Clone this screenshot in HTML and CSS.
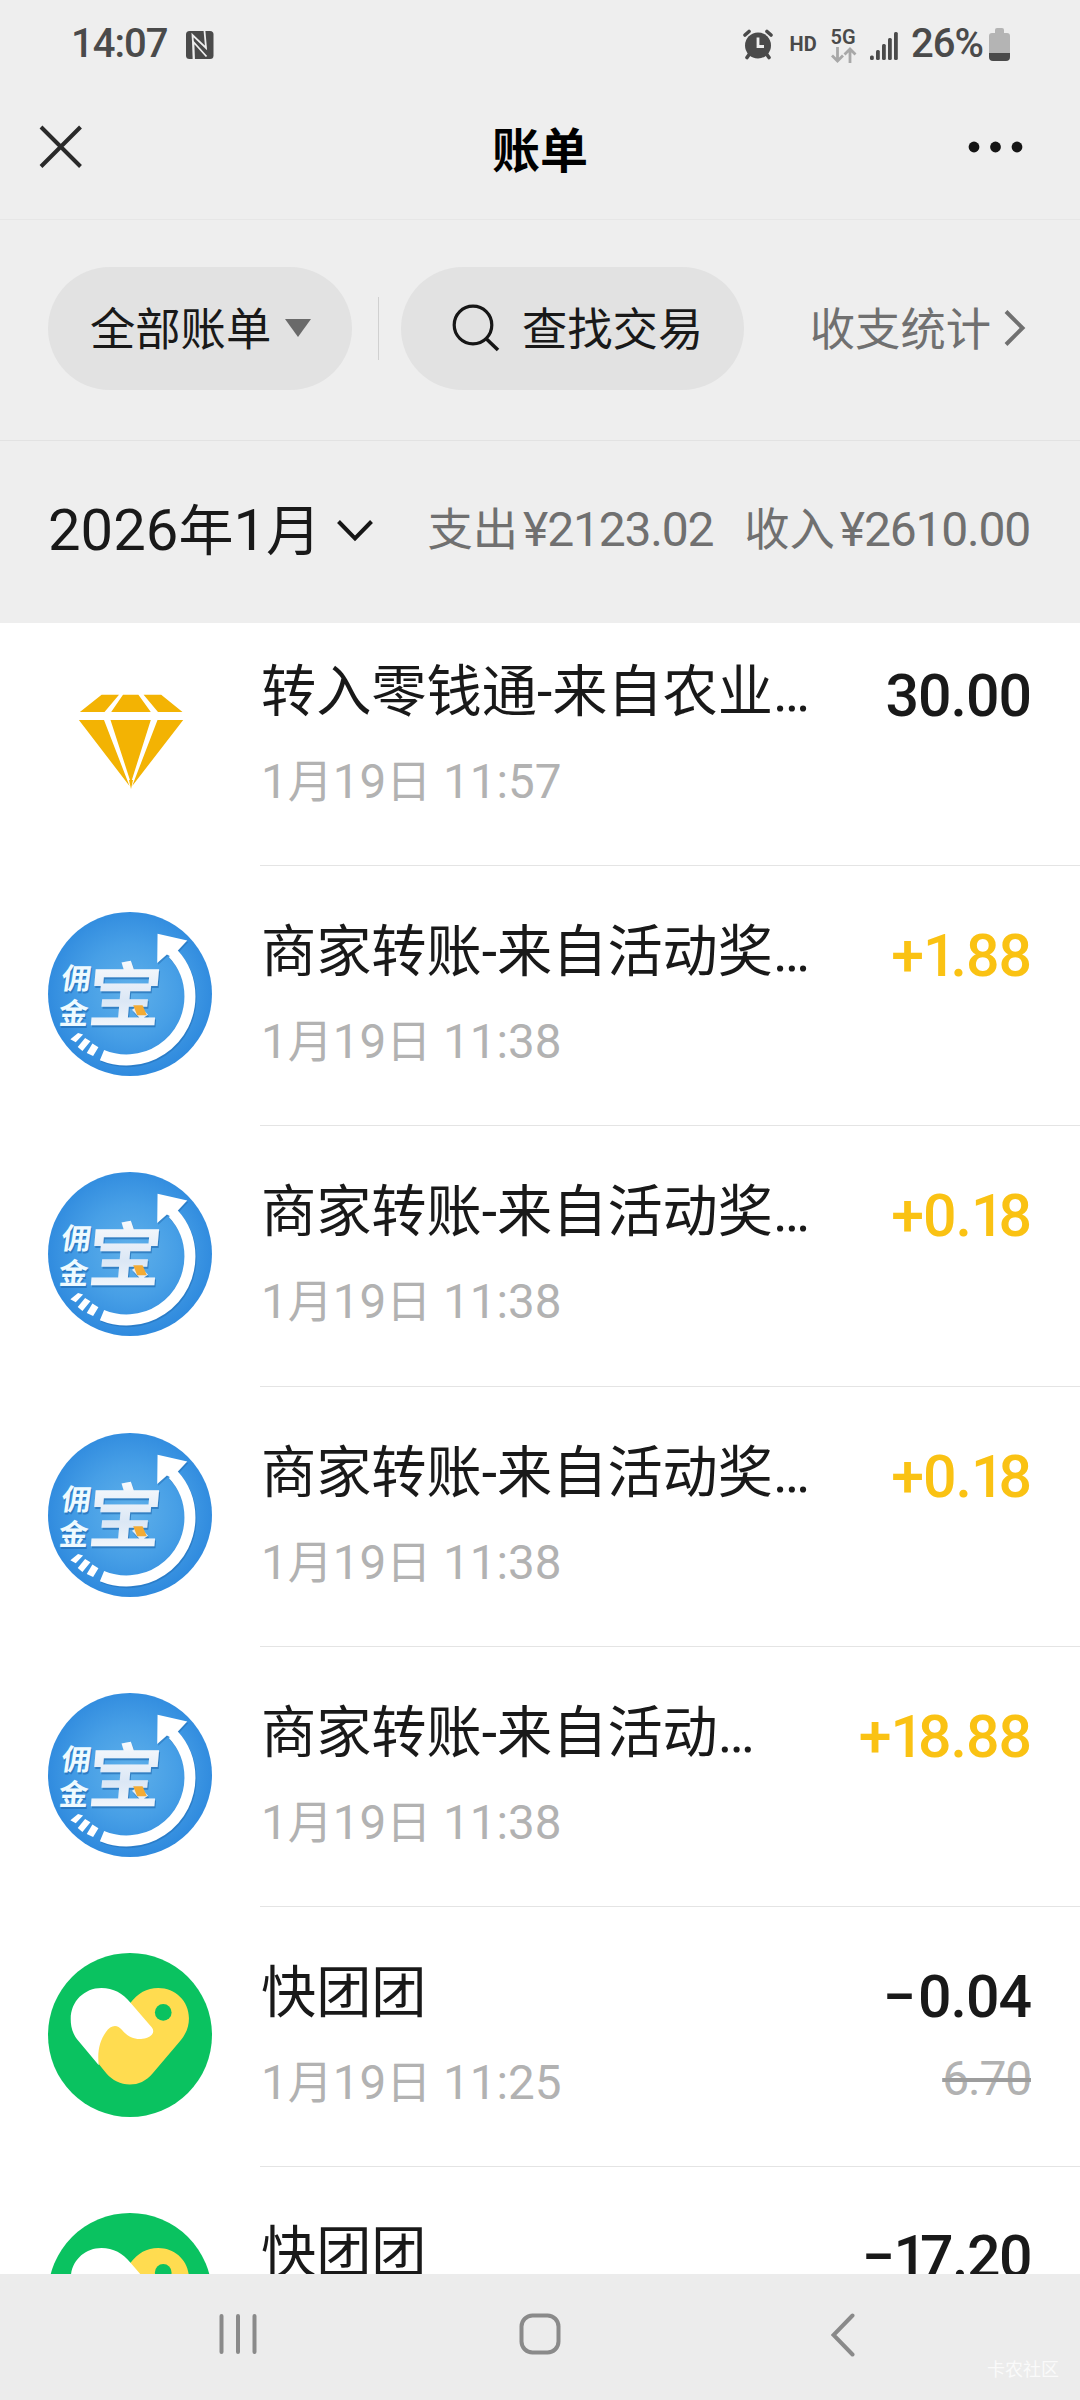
FILE: index.html
```html
<!DOCTYPE html>
<html lang="zh-CN">
<head>
<meta charset="utf-8">
<title>账单</title>
<link rel="stylesheet" href="styles.css">
</head>
<body>
<svg class="defs" aria-hidden="true">
  <defs>
    <radialGradient id="blue" cx="0.5" cy="0.48" r="0.52">
      <stop offset="0" stop-color="#5fb0ea"/>
      <stop offset="0.55" stop-color="#479fe6"/>
      <stop offset="1" stop-color="#2f8ade"/>
    </radialGradient>
    <linearGradient id="silver" x1="0" y1="0" x2="0" y2="1">
      <stop offset="0.1" stop-color="#ffffff"/>
      <stop offset="0.6" stop-color="#dbe7f5"/>
      <stop offset="1" stop-color="#ffffff"/>
    </linearGradient>
    <symbol id="yongjinbao" viewBox="55 67 491 491">
      <circle cx="300.500" cy="312.500" r="245.500" fill="url(#blue)"/>
      <g fill="#1d66ad" opacity="0.45" transform="translate(3 5)">
        <path d="M383 132L472 152L446 180L425 198L411 194L382 220Z"/>
        <path d="M429 190.400A190 190 0 0 1 480 320A190 190 0 0 1 216.700 495.300" fill="none" stroke="#1d66ad" stroke-width="33"/>
      </g>
      <path d="M383 132L472 152L446 180L425 202L411 194L382 220Z" fill="#fff"/>
      <path d="M429 190.400A190 190 0 0 1 480 320A190 190 0 0 1 216.700 495.300" fill="none" stroke="#fff" stroke-width="33"/>
      <path d="M145 429L160 434L138 457L122 448ZM166 444L182 454L158 483L144 471ZM188 461L206 472L190 498L171 489Z" fill="#fff"/>
      <g class="logo-shadow" transform="translate(3 5)">
        <text class="logo-big" transform="translate(168 394) skewX(-5) scale(1.06 1)">宝</text>
        <text class="logo-small" transform="translate(92 298) skewX(-8)">佣</text>
        <text class="logo-small" transform="translate(86 402) skewX(-4)">金</text>
      </g>
      <text class="logo-big" fill="url(#silver)" transform="translate(168 394) skewX(-5) scale(1.06 1)">宝</text>
      <text class="logo-small" fill="#eefaff" transform="translate(92 298) skewX(-8)">佣</text>
      <text class="logo-small" fill="#eefaff" transform="translate(86 402) skewX(-4)">金</text>
      <path d="M310 346H338L351 376H322Z" fill="#f3ab35"/>
    </symbol>
    <symbol id="kuaituan" viewBox="55 69 491 491">
      <circle cx="300.500" cy="314.500" r="245.500" fill="#0ac260"/>
      <path d="M302 218C324 190 350 174 385 174C436 174 477 213 477 264C477 290 468 312 450 333L368 430C348 453 326 463 300 463C272 463 248 450 230 430L190 380L240 260Z" fill="#ffdc50"/>
      <path d="M147 333C128 312 123 290 123 266C123 214 164 174 215 174C250 174 280 190 302 218L366 292C378 308 362 323 338 326C314 329 292 319 276 299C262 281 242 285 228 306C209 333 202 365 207 405Z" fill="#fff"/>
      <circle cx="400" cy="247" r="25" fill="#0ac260"/>
    </symbol>
  </defs>
</svg>

<header class="status">
  <span class="status-text">14:07</span>
  <svg class="nfc" width="28" height="28" viewBox="0 0 28 28"><rect width="27.500" height="28" rx="3.500" fill="#4a4a4a"/><path d="M8 28L6.500 4L20 17L18.500 0" fill="none" stroke="#eee" stroke-width="1.800"/><path d="M7.500 28V11L20.500 25.500" fill="none" stroke="#eee" stroke-width="1.800"/></svg>
  <div class="status-right">
    <svg class="alarm" width="30" height="31" viewBox="0 0 30 31"><g fill="none" stroke="#4a4a4a" stroke-width="3.600" stroke-linecap="round"><path d="M2 6L6 2.500M28 6L24 2.500M6.500 25L4 28.500M23.500 25L26 28.500"/></g><circle cx="15" cy="16.500" r="13" fill="#4a4a4a"/><path d="M15 8.500V17.500H21" fill="none" stroke="#eee" stroke-width="2.800"/></svg>
    <span class="hd">HD</span>
    <div class="net">
      <span class="net-label">5G</span>
      <svg width="26" height="16" viewBox="0 0 26 16"><g fill="none" stroke="#a8a8a8" stroke-width="2.800"><path d="M6.500 0V14M1 8.500L6.500 14L12 8.500M19 16V2M13.500 7.500L19 2L24.500 7.500"/></g></svg>
    </div>
    <svg class="signal" width="28" height="28" viewBox="0 0 28 28" fill="#4a4a4a"><rect y="23.500" width="3.800" height="4.500" rx="1.500"/><rect x="6" y="18" width="3.800" height="10" rx="1.500"/><rect x="12" y="12" width="3.800" height="16" rx="1.500"/><rect x="18" y="6" width="3.800" height="22" rx="1.500"/><rect x="24" y="0" width="3.800" height="28" rx="1.500"/></svg>
    <span class="status-text battery-text">26%</span>
    <svg width="21" height="33" viewBox="0 0 21 33"><path d="M6 2Q6 0 8 0H13Q15 0 15 2V5H18Q21 5 21 8V25H0V8Q0 5 3 5H6Z" fill="#b4b4b4"/><path d="M0 25H21V29Q21 33 17 33H4Q0 33 0 29Z" fill="#4a4a4a"/></svg>
  </div>
</header>

<div class="titlebar">
  <svg width="44" height="44" viewBox="0 0 44 44"><path d="M2 2L41.500 41.500M41.500 2L2 41.500" stroke="#2a2a2a" stroke-width="4" fill="none"/></svg>
  <h1 class="title">账单</h1>
  <svg width="56" height="12" viewBox="0 0 56 12" fill="#151515"><circle cx="6" cy="6" r="5.400"/><circle cx="27.500" cy="6" r="5.400"/><circle cx="49" cy="6" r="5.400"/></svg>
</div>

<div class="filters">
  <div class="pill pill-all"><span class="label">全部账单</span><svg width="26" height="18" viewBox="0 0 26 18"><path d="M0 0H26L13 18Z" fill="#6a6a6a"/></svg></div>
  <div class="divider"></div>
  <div class="pill pill-search"><svg width="48" height="48" viewBox="0 0 48 48"><circle cx="21" cy="21" r="18.800" fill="none" stroke="#161616" stroke-width="3.200"/><path d="M34 34.500L46 46" stroke="#161616" stroke-width="3.600"/></svg><span class="label">查找交易</span></div>
  <div class="stats"><span class="label">收支统计</span><svg width="22" height="36" viewBox="0 0 22 36"><path d="M2 1.500L18.500 18L2 34.500" fill="none" stroke="#707070" stroke-width="4"/></svg></div>
</div>

<div class="month">
  <div class="month-name">2026<span class="han">年</span>1<span class="han">月</span></div>
  <svg class="month-arrow" width="36" height="22" viewBox="0 0 36 22"><path d="M1.500 1.500L18 18.500L34.500 1.500" fill="none" stroke="#161616" stroke-width="4"/></svg>
  <div class="totals"><div class="total"><span>支出</span><span class="sum">¥2123.02</span></div><div class="total"><span>收入</span><span class="sum">¥2610.00</span></div></div>
</div>

<main class="list">
  <div class="row row-first">
    <svg class="avatar" viewBox="0 0 164 164" fill="#f3b303"><path d="M53.600 42.700H71L56.500 60H31.900ZM75 42.700H90.400L102.800 60H63.200ZM95.600 42.700H113.200L134.500 60H110ZM30.900 68H56L81.500 134ZM62.500 68H102.800L82.900 131ZM109.500 68H135.200L84.200 134Z"/><path d="M81 128H85L83 137Z"/></svg>
    <div class="body"><div class="info"><div class="name">转入零钱通-来自农业…</div><div class="date">1<span class="han">月</span>19<span class="han">日</span> 11:57</div></div><div class="money"><div class="amount">30.00</div></div></div>
  </div>
  <div class="row">
    <svg class="avatar"><use href="#yongjinbao"/></svg>
    <div class="body"><div class="info"><div class="name">商家转账-来自活动奖…</div><div class="date">1<span class="han">月</span>19<span class="han">日</span> 11:38</div></div><div class="money"><div class="amount income">+<span class="slim">1</span>.88</div></div></div>
  </div>
  <div class="row">
    <svg class="avatar"><use href="#yongjinbao"/></svg>
    <div class="body"><div class="info"><div class="name">商家转账-来自活动奖…</div><div class="date">1<span class="han">月</span>19<span class="han">日</span> 11:38</div></div><div class="money"><div class="amount income">+0.<span class="slim">1</span>8</div></div></div>
  </div>
  <div class="row">
    <svg class="avatar"><use href="#yongjinbao"/></svg>
    <div class="body"><div class="info"><div class="name">商家转账-来自活动奖…</div><div class="date">1<span class="han">月</span>19<span class="han">日</span> 11:38</div></div><div class="money"><div class="amount income">+0.<span class="slim">1</span>8</div></div></div>
  </div>
  <div class="row">
    <svg class="avatar"><use href="#yongjinbao"/></svg>
    <div class="body"><div class="info"><div class="name">商家转账-来自活动…</div><div class="date">1<span class="han">月</span>19<span class="han">日</span> 11:38</div></div><div class="money"><div class="amount income">+<span class="slim">1</span>8.88</div></div></div>
  </div>
  <div class="row">
    <svg class="avatar"><use href="#kuaituan"/></svg>
    <div class="body"><div class="info"><div class="name">快团团</div><div class="date">1<span class="han">月</span>19<span class="han">日</span> 11:25</div></div><div class="money"><div class="amount"><span class="minus">−</span>0.04</div><div class="old">6.70</div></div></div>
  </div>
  <div class="row">
    <svg class="avatar"><use href="#kuaituan"/></svg>
    <div class="body"><div class="info"><div class="name">快团团</div></div><div class="money"><div class="amount tight">−<span class="slim">1</span>7.20</div></div></div>
  </div>
</main>

<nav class="nav">
  <svg width="38" height="42" viewBox="0 0 38 42"><path d="M2.500 3V39M19 3V39M35.500 3V39" stroke="#8a8a8a" stroke-width="4" stroke-linecap="round"/></svg>
  <svg class="home" width="42" height="42" viewBox="0 0 42 42"><rect x="2.500" y="2.500" width="37" height="37" rx="11" fill="none" stroke="#8a8a8a" stroke-width="4"/></svg>
  <svg width="24" height="44" viewBox="0 0 24 44"><path d="M21.500 2.500L2.500 22L21.500 41.500" fill="none" stroke="#8a8a8a" stroke-width="4" stroke-linecap="round"/></svg>
  <span class="watermark">卡农社区</span>
</nav>
</body>
</html>
```
FILE: styles.css
```css
* { box-sizing: border-box; }
body {
  margin: 0;
  width: 1080px;
  height: 2400px;
  overflow: hidden;
  display: flex;
  flex-direction: column;
  background: #eeeeee;
  color: #191919;
  font-family: Roboto, "Noto Sans CJK SC", sans-serif;
}
svg { display: block; flex: none; }
.defs { position: absolute; width: 0; height: 0; }

.status { height: 88px; display: flex; align-items: center; padding: 0 70px 0 71px; color: #4a4a4a; }
.status-text { font-size: 40px; font-weight: 500; line-height: 48px; letter-spacing: -1px; }
.nfc { margin-left: 19px; margin-top: 2px; }
.status-right { margin-left: auto; display: flex; align-items: center; }
.hd { margin-left: 17px; font-size: 20px; font-weight: 700; width: 28px; }
.net { margin-left: 13px; width: 26px; display: flex; flex-direction: column; gap: 2px; margin-top: 3px; }
.net-label { font-size: 20px; font-weight: 600; line-height: 16px; }
.signal { margin-left: 13.500px; margin-top: 4px; }
.battery-text { margin: 0 6px 0 13px; }

.titlebar { height: 132px; display: flex; align-items: center; justify-content: space-between; padding: 0 56px 13px 39px; border-bottom: 1px solid #e6e6e6; }
.title { margin: 9px 0 0 29px; font-size: 48px; line-height: 60px; font-weight: 700; color: #000; }

.filters { height: 221px; display: flex; align-items: center; padding: 0 54px 4px 48px; border-bottom: 1px solid #e2e2e2; font-size: 45.300px; line-height: 60px; }
.label { padding-top: 5px; }
.pill { height: 123px; border-radius: 62px; background: #e2e2e2; display: flex; align-items: center; }
.pill-all { width: 304px; padding-left: 42px; gap: 14px; }
.divider { width: 1px; height: 63px; margin: 0 22px 0 26px; background: #d0d0d0; }
.pill-search { width: 343px; padding-left: 51px; gap: 22px; }
.stats { margin-left: auto; display: flex; align-items: center; gap: 13px; color: #707070; }

.month { height: 182px; flex: none; display: flex; align-items: center; padding: 1px 50px 5px 48px; }
.month-name { font-size: 58px; line-height: 70px; width: 268px; white-space: nowrap; }
.month-name .han { font-size: 55px; }
.month-arrow { margin: 1px 0 0 21px; }
.totals { margin-left: auto; display: flex; gap: 31px; color: #707070; font-size: 45.300px; line-height: 60px; white-space: nowrap; }
.total { display: flex; align-items: baseline; gap: 5px; }
.sum { font-size: 48px; letter-spacing: -1.200px; }

.list { flex: 1; min-height: 0; overflow: hidden; background: #fff; }
.row { height: 260.200px; display: flex; padding-left: 48px; }
.row-first { margin-top: -17px; }
.avatar { width: 164px; height: 164px; margin: 46px 48px 0 0; }
.body { flex: 1; display: flex; justify-content: space-between; border-bottom: 1px solid #e4e4e4; padding: 53px 49px 0 1px; white-space: nowrap; }
.name { font-size: 55.200px; line-height: 66px; }
.date { margin-top: 29px; font-size: 47.600px; line-height: 56px; color: #b2b2b2; }
.date .han { font-size: 45px; }
.money { text-align: right; }
.amount { font-size: 59px; font-weight: 500; line-height: 74px; letter-spacing: -1px; }
.income { color: #fac213; }
.slim { letter-spacing: -6px; }
.minus { letter-spacing: 2px; }
.tight .slim { letter-spacing: -7px; }
.tight { letter-spacing: -1.500px; }
.old { margin-top: 15px; font-size: 48px; line-height: 60px; letter-spacing: -1.200px; color: #b2b2b2; text-decoration: line-through; text-decoration-color: #9d9d9d; }

.logo-big { font: 700 210px "Noto Sans CJK SC", sans-serif; }
.logo-small { font: 700 88px "Noto Sans CJK SC", sans-serif; }
.logo-shadow { fill: #1d66ad; opacity: 0.6; }

.nav { position: relative; height: 126px; flex: none; background: #ececec; display: flex; justify-content: space-between; padding: 39px 225px 0 219px; }
.home { margin-right: 8px; }
.watermark { position: absolute; right: 21px; bottom: 18px; font-size: 18px; line-height: 24px; color: #fafafa; }
```
